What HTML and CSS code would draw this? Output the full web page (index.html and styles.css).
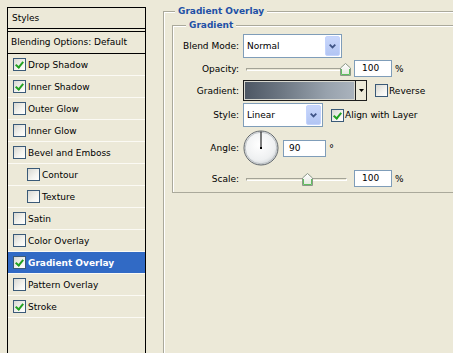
FILE: index.html
```html
<!DOCTYPE html>
<html>
<head>
<meta charset="utf-8">
<title>Layer Style - Gradient Overlay</title>
<link rel="stylesheet" href="styles.css">
</head>
<body>
<div class="dialog">
  <aside class="panel">
    <div class="panel-head">Styles</div>
    <div class="panel-blend">Blending Options: Default</div>
    <ul class="fx-list">
      <li class="fx"><span class="cb is-checked"></span>Drop Shadow</li>
      <li class="fx"><span class="cb is-checked"></span>Inner Shadow</li>
      <li class="fx"><span class="cb"></span>Outer Glow</li>
      <li class="fx"><span class="cb"></span>Inner Glow</li>
      <li class="fx"><span class="cb"></span>Bevel and Emboss</li>
      <li class="fx fx-sub"><span class="cb"></span>Contour</li>
      <li class="fx fx-sub"><span class="cb"></span>Texture</li>
      <li class="fx"><span class="cb"></span>Satin</li>
      <li class="fx"><span class="cb"></span>Color Overlay</li>
      <li class="fx is-active"><span class="cb is-checked"></span>Gradient Overlay</li>
      <li class="fx"><span class="cb"></span>Pattern Overlay</li>
      <li class="fx"><span class="cb is-checked"></span>Stroke</li>
    </ul>
  </aside>

  <main class="settings">
    <fieldset class="group group-outer">
      <legend class="group-title">Gradient Overlay</legend>
      <fieldset class="group group-inner">
        <legend class="group-title">Gradient</legend>

        <div class="row row-blend">
          <span class="lbl">Blend Mode:</span>
          <div class="combo combo-blend">
            <span class="combo-val">Normal</span>
            <span class="combo-btn"><svg width="7" height="5" viewBox="0 0 7 5"><path d="M0.7 0.7 L3.5 3.5 L6.3 0.7" stroke="#3f5486" stroke-width="1.8" fill="none"/></svg></span>
          </div>
        </div>

        <div class="row row-opacity">
          <span class="lbl">Opacity:</span>
          <div class="slider">
            <span class="track"></span>
            <svg class="thumb" style="left:97px" width="11" height="13" viewBox="0 0 11 13"><defs><linearGradient id="tg1" x1="0" y1="0" x2="0" y2="1"><stop offset="0" stop-color="#ffffff"/><stop offset="1" stop-color="#e2e6dc"/></linearGradient></defs><path d="M0.5 5 L5.5 0.5 L10.5 5 L10.5 12.5 L0.5 12.5 Z" fill="url(#tg1)" stroke="#8b9788"/><path d="M1.5 11.5 L9.5 11.5 M1.5 6 L1.5 11.5 M9.5 6 L9.5 11.5" stroke="#5fbf5f" stroke-width="1"/></svg>
          </div>
          <span class="num num-pct">100</span>
          <span class="unit">%</span>
        </div>

        <div class="row row-gradient">
          <span class="lbl">Gradient:</span>
          <div class="grad">
            <span class="grad-swatch"></span>
            <span class="grad-btn"><svg width="5" height="3" viewBox="0 0 5 3"><path d="M0 0 H5 L2.5 3 Z" fill="#000"/></svg></span>
          </div>
          <span class="check check-reverse"><span class="cb"></span>Reverse</span>
        </div>

        <div class="row row-style">
          <span class="lbl">Style:</span>
          <div class="combo combo-style">
            <span class="combo-val">Linear</span>
            <span class="combo-btn"><svg width="7" height="5" viewBox="0 0 7 5"><path d="M0.7 0.7 L3.5 3.5 L6.3 0.7" stroke="#3f5486" stroke-width="1.8" fill="none"/></svg></span>
          </div>
          <span class="check check-align"><span class="cb is-checked"></span>Align with Layer</span>
        </div>

        <div class="row row-angle">
          <span class="lbl">Angle:</span>
          <svg class="dial" width="36" height="36" viewBox="0 0 36 36"><defs><radialGradient id="dg" cx="45%" cy="40%" r="65%"><stop offset="0" stop-color="#ffffff"/><stop offset="0.7" stop-color="#eef0f1"/><stop offset="1" stop-color="#c9ced2"/></radialGradient></defs><circle cx="18" cy="18" r="17" fill="url(#dg)" stroke="#5e6469"/><circle cx="18" cy="18" r="15.8" fill="none" stroke="#b4b9bd" stroke-width="0.8"/><line x1="18" y1="18" x2="18" y2="1.5" stroke="#000" stroke-width="1"/><rect x="17" y="17" width="2" height="2" fill="#000"/></svg>
          <span class="num num-angle">90</span>
          <span class="unit unit-deg">°</span>
        </div>

        <div class="row row-scale">
          <span class="lbl">Scale:</span>
          <div class="slider">
            <span class="track"></span>
            <svg class="thumb" style="left:59px" width="11" height="13" viewBox="0 0 11 13"><defs><linearGradient id="tg2" x1="0" y1="0" x2="0" y2="1"><stop offset="0" stop-color="#ffffff"/><stop offset="1" stop-color="#e2e6dc"/></linearGradient></defs><path d="M0.5 5 L5.5 0.5 L10.5 5 L10.5 12.5 L0.5 12.5 Z" fill="url(#tg2)" stroke="#8b9788"/><path d="M1.5 11.5 L9.5 11.5 M1.5 6 L1.5 11.5 M9.5 6 L9.5 11.5" stroke="#5fbf5f" stroke-width="1"/></svg>
          </div>
          <span class="num num-pct">100</span>
          <span class="unit">%</span>
        </div>
      </fieldset>
    </fieldset>
  </main>
</div>
</body>
</html>
```

FILE: styles.css
```css
* { box-sizing: border-box; }

html, body {
  margin: 0;
  padding: 0;
}

body {
  width: 453px;
  height: 353px;
  overflow: hidden;
  background: #ece9d8;
  color: #000;
  font-family: "DejaVu Sans", Verdana, sans-serif;
  font-size: 9px;
}

.dialog {
  display: flex;
  align-items: flex-start;
  height: 353px;
}

/* ---------- left styles list ---------- */
.panel {
  flex: none;
  width: 139px;
  height: 360px;
  margin: 7px 0 0 7px;
  border: 1px solid #000;
  border-bottom: none;
  background: #ece9d8;
}

.panel-head {
  height: 21px;
  line-height: 20px;
  padding-left: 4px;
  border-bottom: 1px solid #000;
}

.panel-blend {
  height: 23px;
  line-height: 21px;
  margin-top: 2px;
  padding-left: 3px;
  border-top: 1px solid #000;
  border-bottom: 1px solid #000;
  white-space: nowrap;
}

.fx-list {
  list-style: none;
  margin: 0;
  padding: 0;
}

.fx {
  display: flex;
  align-items: center;
  height: 22px;
  padding-left: 5px;
  border-bottom: 1px solid #fbfaf4;
  white-space: nowrap;
}

.fx-sub {
  padding-left: 19px;
}

.fx.is-active {
  background: #316ac5;
  color: #fff;
  font-weight: bold;
}

/* ---------- checkbox ---------- */
.cb {
  position: relative;
  flex: none;
  width: 13px;
  height: 13px;
  margin-right: 2px;
  border: 1px solid #3a5a78;
  background: linear-gradient(135deg, #d8d8d2 0%, #f4f4f0 60%, #ffffff 100%);
}

.cb.is-checked::after {
  content: "";
  position: absolute;
  left: 3px;
  top: 1px;
  width: 3px;
  height: 6px;
  border: solid #21a121;
  border-width: 0 2px 2px 0;
  transform: rotate(40deg);
}

/* ---------- right settings ---------- */
.settings {
  flex: none;
  margin-left: 17px;
}

.group {
  margin: 0;
  padding: 0;
  min-width: 0;
  border: 1px solid #aaa99b;
  box-shadow: inset 1px 1px 0 #fff;
}

.group-title {
  margin-left: 11px;
  padding: 0 3px;
  line-height: 12px;
  font-weight: bold;
  color: #2150a6;
  background: #ece9d8;
}

.group-outer {
  width: 310px;
  height: 360px;
  margin-top: 5px;
}

.group-inner {
  width: 300px;
  margin: 2px 0 0 8px;
  padding: 3px 0 3px 0;
}

.group-inner .group-title {
  margin-left: 13px;
}

.row {
  display: flex;
  align-items: center;
  white-space: nowrap;
}

.row-blend   { height: 24px; }
.row-opacity { height: 21px; }
.row-gradient{ height: 23px; }
.row-style   { height: 26px; }
.row-angle   { height: 40px; }
.row-scale   { height: 21px; }

.lbl {
  flex: none;
  width: 66px;
  margin-right: 4px;
  text-align: right;
}

/* combo boxes */
.combo {
  display: flex;
  align-items: stretch;
  height: 24px;
  padding: 1px;
  border: 1px solid #7f9db9;
  background: #fff;
}

.combo-blend { width: 99px; }
.combo-style { width: 80px; }

.combo-val {
  flex: 1;
  display: flex;
  align-items: center;
  padding-left: 2px;
}

.combo-btn {
  flex: none;
  width: 15px;
  display: flex;
  align-items: center;
  justify-content: center;
  border: 1px solid #c3d3fd;
  border-radius: 2px;
  background: linear-gradient(#c9d7fb, #b2c5f3);
}

/* sliders */
.slider {
  position: relative;
  flex: none;
  width: 110px;
  height: 21px;
  display: flex;
  align-items: center;
  padding: 0 6px 0 3px;
}

.track {
  flex: 1;
  height: 3px;
  margin-top: 2px;
  border-top: 1px solid #a3a396;
  border-left: 1px solid #a3a396;
  border-bottom: 1px solid #fff;
  border-right: 1px solid #fff;
}

.thumb {
  position: absolute;
  top: 5px;
}

/* numeric inputs */
.num {
  flex: none;
  height: 17px;
  line-height: 15px;
  border: 1px solid #7f9db9;
  background: #fff;
}

.num-pct {
  width: 38px;
  margin-left: 1px;
  padding-left: 7px;
}

.num-angle {
  width: 43px;
  margin-left: 4px;
  padding-left: 5px;
}

.unit {
  margin-left: 3px;
}

.unit-deg {
  font-size: 10px;
}

/* gradient picker */
.grad {
  flex: none;
  display: flex;
  width: 124px;
  height: 21px;
  border: 1px solid #1e1e1e;
}

.grad-swatch {
  flex: 1;
  border: 1px solid #d8d8d0;
  background: linear-gradient(90deg, #4d5764 0%, #6e7884 35%, #98a2ad 75%, #aab3bd 100%);
}

.grad-btn {
  flex: none;
  width: 11px;
  display: flex;
  align-items: center;
  justify-content: center;
  border-left: 1px solid #1e1e1e;
  background: #ece9d8;
}

/* labelled checkboxes */
.check {
  display: flex;
  align-items: center;
}

.check .cb {
  margin-right: 1px;
}

.check-reverse { margin-left: 8px; }
.check-align   { margin-left: 8px; }

.dial {
  flex: none;
  display: block;
}
```
